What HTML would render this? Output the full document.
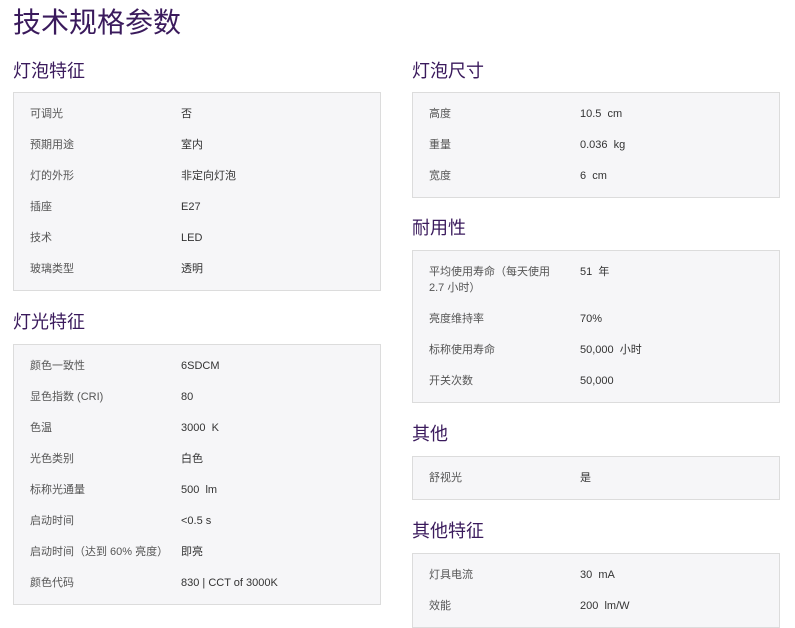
<!DOCTYPE html>
<html><head><meta charset="utf-8"><style>
*{margin:0;padding:0;box-sizing:border-box}
body{width:795px;height:628px;background:#fff;font-family:"Liberation Sans","Noto Sans CJK SC",sans-serif;position:relative;overflow:hidden;color:#333}
h1{position:absolute;left:13px;top:5px;font-size:28px;font-weight:normal;color:#3a1a5c;line-height:36px;letter-spacing:0px}
h2{position:absolute;font-size:18px;font-weight:normal;color:#3a1a5c;line-height:24px}
.box{position:absolute;width:368px;background:#f6f6f8;border:1px solid #dcdcdc;padding:5px 0 6px}
.r{display:flex;padding:7.5px 0;font-size:11px;line-height:16px}
.l{width:167px;padding-left:16px;padding-right:14px;color:#555}
.v{color:#333}
</style></head><body>
<h1>技术规格参数</h1>

<h2 style="left:13px;top:59px">灯泡特征</h2>
<div class="box" style="left:13px;top:92px">
<div class="r"><div class="l">可调光</div><div class="v">否</div></div>
<div class="r"><div class="l">预期用途</div><div class="v">室内</div></div>
<div class="r"><div class="l">灯的外形</div><div class="v">非定向灯泡</div></div>
<div class="r"><div class="l">插座</div><div class="v">E27</div></div>
<div class="r"><div class="l">技术</div><div class="v">LED</div></div>
<div class="r"><div class="l">玻璃类型</div><div class="v">透明</div></div>
</div>

<h2 style="left:13px;top:310px">灯光特征</h2>
<div class="box" style="left:13px;top:344px">
<div class="r"><div class="l">颜色一致性</div><div class="v">6SDCM</div></div>
<div class="r"><div class="l">显色指数 (CRI)</div><div class="v">80</div></div>
<div class="r"><div class="l">色温</div><div class="v">3000&nbsp; K</div></div>
<div class="r"><div class="l">光色类别</div><div class="v">白色</div></div>
<div class="r"><div class="l">标称光通量</div><div class="v">500&nbsp; lm</div></div>
<div class="r"><div class="l">启动时间</div><div class="v">&lt;0.5 s</div></div>
<div class="r"><div class="l">启动时间（达到 60% 亮度）</div><div class="v">即亮</div></div>
<div class="r"><div class="l">颜色代码</div><div class="v">830 | CCT of 3000K</div></div>
</div>

<h2 style="left:412px;top:59px">灯泡尺寸</h2>
<div class="box" style="left:412px;top:92px">
<div class="r"><div class="l">高度</div><div class="v">10.5&nbsp; cm</div></div>
<div class="r"><div class="l">重量</div><div class="v">0.036&nbsp; kg</div></div>
<div class="r"><div class="l">宽度</div><div class="v">6&nbsp; cm</div></div>
</div>

<h2 style="left:412px;top:216px">耐用性</h2>
<div class="box" style="left:412px;top:250px">
<div class="r"><div class="l">平均使用寿命（每天使用 2.7 小时）</div><div class="v">51&nbsp; 年</div></div>
<div class="r"><div class="l">亮度维持率</div><div class="v">70%</div></div>
<div class="r"><div class="l">标称使用寿命</div><div class="v">50,000&nbsp; 小时</div></div>
<div class="r"><div class="l">开关次数</div><div class="v">50,000</div></div>
</div>

<h2 style="left:412px;top:422px">其他</h2>
<div class="box" style="left:412px;top:456px">
<div class="r"><div class="l">舒视光</div><div class="v">是</div></div>
</div>

<h2 style="left:412px;top:519px">其他特征</h2>
<div class="box" style="left:412px;top:553px">
<div class="r"><div class="l">灯具电流</div><div class="v">30&nbsp; mA</div></div>
<div class="r"><div class="l">效能</div><div class="v">200&nbsp; lm/W</div></div>
</div>
</body></html>
